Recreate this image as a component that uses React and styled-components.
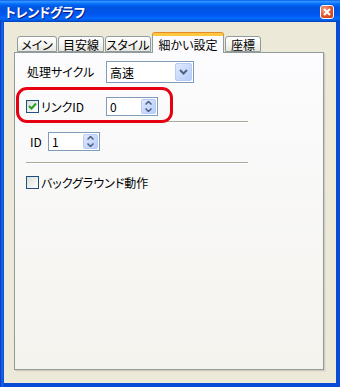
import React from "react";
import styled, { createGlobalStyle } from "styled-components";

const Global = createGlobalStyle`
  html, body { margin: 0; padding: 0; background: #ece9d8; }
  body { font-family: "Noto Sans CJK JP", "Noto Sans", sans-serif; font-size: 12px; color: #000; }
  * { box-sizing: border-box; }
`;

const Window = styled.div`
  width: 340px;
  height: 387px;
  display: flex;
  flex-direction: column;
  background: #0a4bd6;
  overflow: hidden;
`;

const TitleBar = styled.div`
  height: 22px;
  flex: none;
  display: flex;
  align-items: center;
  justify-content: space-between;
  padding: 0 6px 0 5px;
  background: linear-gradient(
    #0058ee 0%, #3593ff 6%, #288eff 10%, #127dff 14%, #036ffc 18%,
    #0262ee 24%, #0057e5 32%, #0054e3 40%, #0055eb 60%, #005bf5 72%,
    #026afe 82%, #0062ef 90%, #0052d6 95%, #0040ab 100%
  );
`;

const Title = styled.span`
  color: #fff;
  font-weight: bold;
  font-size: 13px;
  font-feature-settings: "palt";
  letter-spacing: -0.3px;
  text-shadow: 1px 1px 0 #0a1883;
  line-height: 1;
`;

const CloseButton = styled.div`
  width: 14px;
  height: 14px;
  margin-top: 1px;
  border: 1px solid #fff;
  border-radius: 3px;
  background: radial-gradient(circle at 30% 30%, #f0a184 0%, #e1552e 55%, #c2351a 100%);
  display: flex;
  align-items: center;
  justify-content: center;
`;

const Frame = styled.div`
  flex: 1;
  display: flex;
  padding: 0 4px 4px 4px;
  background: linear-gradient(90deg, #0831b8 0px, #166aee 2px, #0a4bd6 4px);
`;

const Body = styled.div`
  flex: 1;
  background: #ece9d8;
  display: flex;
  flex-direction: column;
  padding: 11px 12px 13px 10px;
`;

const TabRow = styled.div`
  display: flex;
  height: 20px;
  gap: 1px;
  padding-left: 3px;
  position: relative;
  z-index: 2;
`;

const Tab = styled.div`
  width: ${(p) => p.$w}px;
  height: ${(p) => (p.$active ? 20 : 16)}px;
  margin-top: ${(p) => (p.$active ? 0 : 3)}px;
  border: 1px solid #919b9c;
  border-bottom: ${(p) => (p.$active ? "none" : "1px solid #919b9c")};
  border-top: ${(p) => (p.$active ? "3px solid #ffc83c" : "1px solid #919b9c")};
  border-radius: 3px 3px 0 0;
  background: ${(p) => (p.$active ? "#fcfcfe" : "linear-gradient(#ffffff, #f3f3ef 60%, #e6e5df)")};
  display: flex;
  align-items: center;
  justify-content: center;
  font-size: 12px;
  font-feature-settings: "palt";
  line-height: 1;
  white-space: nowrap;
  padding-top: ${(p) => (p.$active ? 0 : 1)}px;
  box-shadow: ${(p) => (p.$active ? "inset 0 -0px 0 #fff, 0 -1px 0 #e68b2c" : "none")};
`;

const Panel = styled.div`
  flex: 1;
  margin-top: -1px;
  border: 1px solid #919b9c;
  background: linear-gradient(#fcfcfe, #f4f3ee);
  box-shadow: 1px 1px 0 #d0cebf, 2px 2px 0 #e3e0d0;
  display: flex;
  flex-direction: column;
  padding: 8px 0 0 11px;
  position: relative;
  z-index: 1;
`;

const Row = styled.div`
  display: flex;
  align-items: center;
  height: ${(p) => p.$h || 19}px;
  margin-top: ${(p) => p.$mt || 0}px;
  padding-left: ${(p) => p.$pl || 0}px;
  position: relative;
`;

const Label = styled.span`
  width: ${(p) => (p.$w ? p.$w + "px" : "auto")};
  flex: none;
  font-size: 12px;
  font-feature-settings: "palt";
  line-height: 1;
  white-space: nowrap;
`;

const Select = styled.div`
  width: 88px;
  height: 22px;
  border: 1px solid #7f9db9;
  background: #fff;
  display: flex;
  align-items: center;
  justify-content: space-between;
  padding: 1px 1px 1px 3px;
  font-size: 12px;
`;

const BlueButton = styled.div`
  width: ${(p) => p.$w}px;
  height: 100%;
  border: 1px solid #b7cbf5;
  border-radius: 2px;
  background: linear-gradient(135deg, #dfe8fd, #b8cdfa);
  display: flex;
  flex-direction: column;
  align-items: center;
  justify-content: ${(p) => (p.$spin ? "space-around" : "center")};
`;

const SpinBox = styled.div`
  width: ${(p) => p.$w}px;
  height: 19px;
  border: 1px solid #7f9db9;
  background: #fff;
  display: flex;
  align-items: center;
  justify-content: space-between;
  padding: 1px 1px 1px 3px;
  font-size: 12px;
  flex: none;
`;

const CheckBox = styled.div`
  width: 13px;
  height: 13px;
  border: 1px solid #1c5180;
  background: linear-gradient(135deg, #dcdcd7, #ffffff);
  display: flex;
  align-items: center;
  justify-content: center;
  flex: none;
  margin-right: 2px;
`;

const Separator = styled.div`
  width: 222px;
  height: 2px;
  margin-left: ${(p) => p.$ml || 0}px;
  margin-top: ${(p) => p.$mt || 0}px;
  border-top: 1px solid #aca899;
  border-bottom: 1px solid #ffffff;
  flex: none;
`;

const Highlight = styled.div`
  position: absolute;
  left: -10px;
  top: -10px;
  width: 157px;
  height: 36px;
  border: 3px solid #e60012;
  border-radius: 11px;
  pointer-events: none;
  z-index: 3;
`;

const Chevron = () => (
  <svg width="9" height="6" viewBox="0 0 9 6">
    <path d="M1 1 L4.5 4.5 L8 1" stroke="#4d6185" strokeWidth="2" fill="none" />
  </svg>
);

const Up = () => (
  <svg width="7" height="4" viewBox="0 0 7 4">
    <path d="M0.5 3.5 L3.5 0.5 L6.5 3.5" stroke="#4d6185" strokeWidth="1.5" fill="none" />
  </svg>
);
const Down = () => (
  <svg width="7" height="4" viewBox="0 0 7 4">
    <path d="M0.5 0.5 L3.5 3.5 L6.5 0.5" stroke="#4d6185" strokeWidth="1.5" fill="none" />
  </svg>
);

const Spin = ({ value, w }) => (
  <SpinBox $w={w}>
    <span>{value}</span>
    <BlueButton $w={15} $spin>
      <Up />
      <Down />
    </BlueButton>
  </SpinBox>
);

const Check = ({ checked }) => (
  <CheckBox>
    {checked && (
      <svg width="9" height="9" viewBox="0 0 9 9">
        <path d="M1 4 L3.5 6.5 L8 1.5" stroke="#21a121" strokeWidth="2" fill="none" />
      </svg>
    )}
  </CheckBox>
);

const tabs = [
  { label: "メイン", w: 40 },
  { label: "目安線", w: 46 },
  { label: "スタイル", w: 46 },
  { label: "細かい設定", w: 72, active: true },
  { label: "座標", w: 36 },
];

export default function App() {
  return (
    <>
      <Global />
      <Window>
        <TitleBar>
          <Title>トレンドグラフ</Title>
          <CloseButton>
            <svg width="8" height="8" viewBox="0 0 8 8">
              <path d="M1 1 L7 7 M7 1 L1 7" stroke="#fff" strokeWidth="2" />
            </svg>
          </CloseButton>
        </TitleBar>
        <Frame>
          <Body>
            <TabRow>
              {tabs.map((t) => (
                <Tab key={t.label} $w={t.w} $active={t.active}>
                  {t.label}
                </Tab>
              ))}
            </TabRow>
            <Panel>
              <Row $h={22} $pl={1}>
                <Label $w={79}>処理サイクル</Label>
                <Select>
                  <span>高速</span>
                  <BlueButton $w={17}>
                    <Chevron />
                  </BlueButton>
                </Select>
              </Row>
              <Row $mt={14}>
                <Highlight />
                <Check checked />
                <Label $w={65}>リンクID</Label>
                <Spin value="0" w={52} />
              </Row>
              <Separator $mt={5} />
              <Row $mt={9} $pl={4}>
                <Label $w={18}>ID</Label>
                <Spin value="1" w={52} />
              </Row>
              <Separator $mt={11} />
              <Row $mt={12} $h={13}>
                <Check />
                <Label>バックグラウンド動作</Label>
              </Row>
            </Panel>
          </Body>
        </Frame>
      </Window>
    </>
  );
}
